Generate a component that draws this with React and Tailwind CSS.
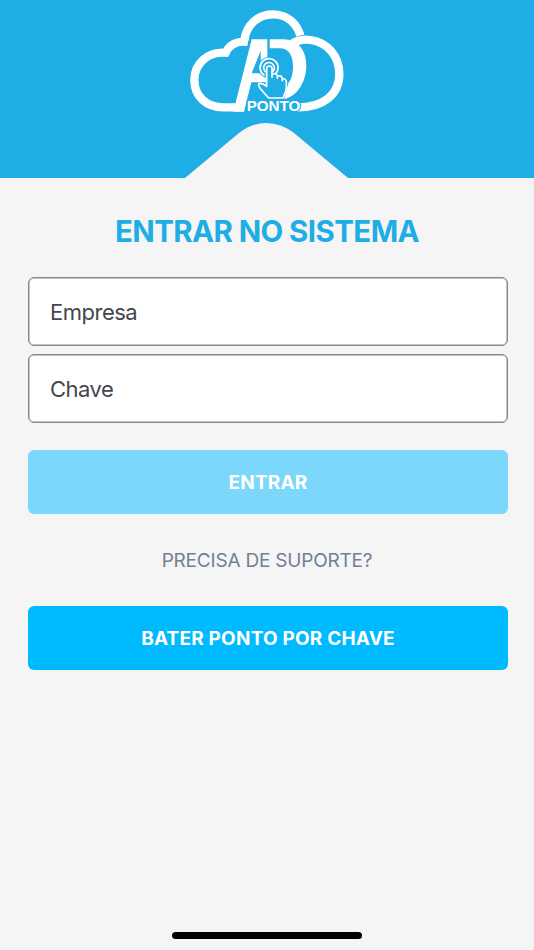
function Logo() {
  return (
    <svg width="175" height="120" viewBox="0 0 525 360" fill="none" aria-label="AD Ponto">
      {/* cloud */}
      <g stroke="#fff" strokeWidth="25">
        <path d="M192 322H130C80 322 43 290 43 240C43 190 84 154 137 158C148 134 172 121 204 126" />
        <path d="M193 122C198 74 235 43 278 43C322 43 354 70 364 118" />
        <path stroke="#1eade4" strokeWidth="30" d="M334 134C350 124 362 120 376 119" />
        <path d="M328 136C350 120 372 117 392 120C442 127 478 168 478 222C478 284 430 322 352 322" />
      </g>
      {/* monogram */}
      <path fill="#fff" fillRule="evenodd" d="M215 118H262V247H214L192 335H160ZM242 152L215 220H242Z" />
      <path fill="#fff" d="M269 118H310C355 118 379 152 379 197C379 243 353 289 312 297L300 280L318 256C332 246 339 225 339 200C339 165 325 145 300 145H269Z" />
      {/* tapping hand */}
      <circle cx="267" cy="203" r="32" fill="#1eade4" />
      <path fill="#1eade4" d="M232 248H262V225H300L325 250L312 299H258L232 268Z" />
      <g stroke="#fff" strokeWidth="5" strokeLinecap="round" strokeLinejoin="round">
        <path d="M252 225A27 27 0 1 1 285 223" />
        <path d="M256 215A16 16 0 1 1 279 214" />
        <path fill="#1eade4" d="M260 255V205Q261 198 268 198Q275 198 276 205V232V225Q285 217 292 226V235V230Q301 223 307 234V242V237Q316 234 319 245V264Q318 276 309 294H266L243 268Q233 256 237 250Q249 249 260 259Z" />
      </g>
      <text
        x="200"
        y="333"
        textLength="161"
        lengthAdjust="spacingAndGlyphs"
        fill="#fff"
        stroke="#1eade4"
        strokeWidth="7"
        paintOrder="stroke"
        className="font-['Liberation_Sans',sans-serif] text-[44px] font-bold"
      >
        PONTO
      </text>
    </svg>
  )
}

function Field({ label, type = 'text' }) {
  return (
    <input
      type={type}
      placeholder={label}
      className="h-[69px] w-full rounded-md border border-[#88878e] bg-white px-[21px] pt-px text-[22px] tracking-[-0.5px] text-[#46464f] shadow-[inset_0_0_0_0.5px_#88878e] outline-none placeholder:text-[#46464f]"
    />
  )
}

export default function App() {
  return (
    <div className="flex h-[950px] w-full flex-col bg-[#f5f5f5] font-['Inter',sans-serif]">
      <header className="flex h-[178px] flex-col items-center bg-[#1eade4]">
        <div className="h-[120px] w-[175px]">
          <Logo />
        </div>
        <svg width="164" height="58" viewBox="0 0 164 58" className="block">
          <path fill="#f5f5f5" d="M0 58L54 13Q67 3 81 3Q96 3 109 13L163 58Z" />
        </svg>
      </header>

      <main className="flex flex-1 flex-col pt-[33px] pr-[26px] pl-7">
        <h1 className="pr-0.5 text-center text-[29.5px] leading-10 font-bold tracking-[-0.6px] text-[#1eade4]">
          ENTRAR NO SISTEMA
        </h1>
        <form className="mt-[26px] flex flex-col">
          <div className="flex flex-col gap-2">
            <Field label="Empresa" />
            <Field label="Chave" type="password" />
          </div>
          <button
            type="button"
            className="mt-[27px] h-16 rounded-md bg-[#7cd8fb] pt-0.5 text-[19px] font-bold tracking-[0.2px] text-white"
          >
            ENTRAR
          </button>
          <a className="mt-8 pr-0.5 text-center text-[19px] leading-[30px] tracking-[-0.2px] text-[#718096]">
            PRECISA DE SUPORTE?
          </a>
          <button
            type="button"
            className="mt-[30px] h-16 rounded-md bg-[#00baff] pt-0.5 text-[19px] font-bold tracking-[0.2px] text-white"
          >
            BATER PONTO POR CHAVE
          </button>
        </form>
      </main>

      <div className="mx-auto mb-[11px] h-[7px] w-[190px] rounded-full bg-black" />
    </div>
  )
}
